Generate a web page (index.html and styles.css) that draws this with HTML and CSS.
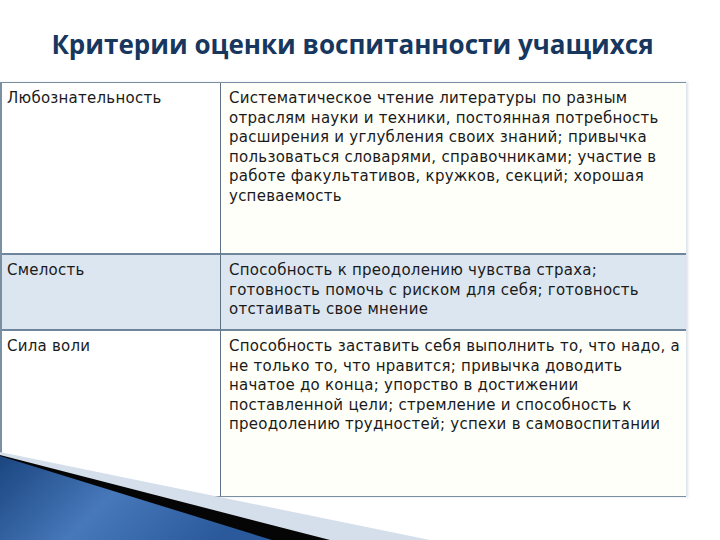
FILE: index.html
```html
<!DOCTYPE html>
<html lang="ru">
<head>
<meta charset="utf-8">
<link rel="stylesheet" href="styles.css">
</head>
<body>
<div class="slide">
  <h1 class="title">Критерии оценки воспитанности учащихся</h1>
  <div class="table">
    <div class="cell name">Любознательность</div>
    <div class="cell desc tint">Систематическое чтение литературы по разным<br>отраслям науки и техники, постоянная потребность<br>расширения и углубления своих знаний; привычка<br>пользоваться словарями, справочниками; участие в<br>работе факультативов, кружков, секций; хорошая<br>успеваемость</div>
    <div class="cell name blue">Смелость</div>
    <div class="cell desc blue">Способность к преодолению чувства страха;<br>готовность помочь с риском для себя; готовность<br>отстаивать свое мнение</div>
    <div class="cell name last">Сила воли</div>
    <div class="cell desc tint last">Способность заставить себя выполнить то, что надо, а<br>не только то, что нравится; привычка доводить<br>начатое до конца; упорство в достижении<br>поставленной цели; стремление и способность к<br>преодолению трудностей; успехи в самовоспитании</div>
  </div>
  <svg class="swoosh" width="720" height="100" viewBox="0 0 720 100">
    <defs>
      <linearGradient id="bl" x1="0" y1="0" x2="1" y2="0.3">
        <stop offset="0" stop-color="#1a457f"/>
        <stop offset="0.5" stop-color="#4778ba"/>
        <stop offset="1" stop-color="#2a5a9c"/>
      </linearGradient>
    </defs>
    <polygon points="0,12 430,100 0,100" fill="#d5deeb"/>
    <polygon points="0,15 330,100 0,100" fill="#050505"/>
    <polygon points="0,16 272,100 0,100" fill="url(#bl)"/>
  </svg>
</div>
</body>
</html>
```
FILE: styles.css
```css
html, body {
  margin: 0;
  padding: 0;
  background: #ffffff;
}
.slide {
  position: relative;
  width: 720px;
  height: 540px;
  overflow: hidden;
}
.title {
  margin: 0;
  padding-top: 28px;
  height: 53px;
  box-sizing: border-box;
  text-align: center;
  font-family: "Open Sans", "DejaVu Sans", sans-serif;
  font-weight: 700;
  font-size: 26px;
  line-height: 32px;
  color: #17375e;
  padding-right: 15px;
}
.table {
  margin-top: 29px;
  width: 686px;
  display: grid;
  grid-template-columns: 219px 1fr;
  grid-template-rows: 172px 76px 165px;
  border: 1px solid #7b8fa3;
  border-left-width: 2px;
  box-sizing: border-box;
  box-shadow: 2px 0 2px rgba(120, 140, 170, 0.25);
  font-family: "DejaVu Sans", Verdana, sans-serif;
  font-size: 15px;
  letter-spacing: 0.25px;
  line-height: 19.5px;
  color: #1a1a1a;
}
.cell {
  padding: 6px 6px 0 5px;
  border-bottom: 2px solid #6f859b;
  white-space: nowrap;
}
.cell.last {
  border-bottom: none;
}
.name {
  border-right: 1px solid #5e7285;
  background: #ffffff;
}
.desc {
  padding-left: 8px;
}
.tint {
  background: #fffff9;
}
.blue {
  background: #dce6f1;
}
.swoosh {
  position: absolute;
  left: 0;
  bottom: 0;
  display: block;
}
```
